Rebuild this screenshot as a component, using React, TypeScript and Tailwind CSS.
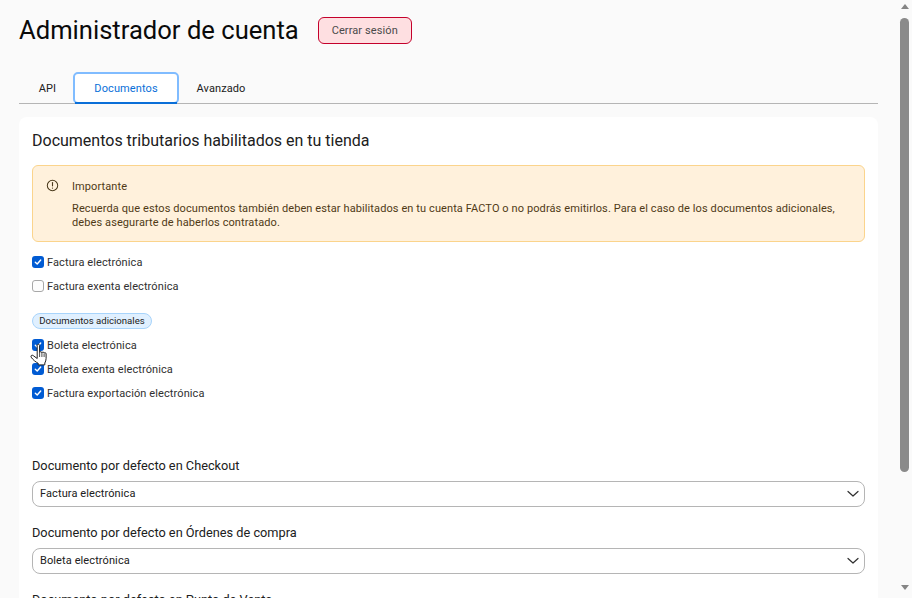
const adicionales = [
  { label: "Boleta electrónica", checked: true },
  { label: "Boleta exenta electrónica", checked: true },
  { label: "Factura exportación electrónica", checked: true },
];

function Checkbox({ label, checked }: { label: string; checked: boolean }) {
  return (
    <label className="flex h-[24px] items-center gap-[3px] text-[11px] tracking-[0.1px] text-[#303030]">
      {checked ? (
        <span className="-mt-[3px] flex h-[12px] w-[12px] items-center justify-center rounded-[3px] bg-[#005bd3]">
          <svg viewBox="0 0 12 12" className="h-[12px] w-[12px]" fill="none">
            <path d="M3.3 6.2 5.2 8l3.5-4" stroke="#fff" strokeWidth="1.4" strokeLinecap="round" strokeLinejoin="round" />
          </svg>
        </span>
      ) : (
        <span className="-mt-[3px] h-[12px] w-[12px] rounded-[3px] border border-[#a8a8a8] bg-[#fdfdfd]" />
      )}
      <span>{label}</span>
    </label>
  );
}

function SelectField({ label, value }: { label: string; value: string }) {
  return (
    <div className="flex flex-col">
      <div className="mb-[6px] text-[12.75px] leading-[18px] text-[#202020]">{label}</div>
      <div className="flex h-[26px] items-center justify-between rounded-[8px] border border-[#b5b5b5] bg-white pl-[7px] pr-[5px] text-[11px] tracking-[0.1px] text-[#202020]">
        <span>{value}</span>
        <svg viewBox="0 0 12 8" className="h-[8px] w-[12px]" fill="none">
          <path d="M1 1.5 6 6l5-4.5" stroke="#303030" strokeWidth="1.2" strokeLinecap="round" strokeLinejoin="round" />
        </svg>
      </div>
    </div>
  );
}

function HandCursor() {
  return (
    <svg viewBox="0 0 18 24" className="absolute left-[-2px] top-[9px] h-[24px] w-[18px]">
      <path
        d="M7.2 2.5c0-1.6 2.4-1.6 2.4 0v7c.4-1.2 2.2-1.1 2.3.3.3-1.1 2.1-1 2.2.4.4-.9 2-.7 2 .7v4.6c0 2-.6 3-1.3 4.5v1.9H8.2v-1.6C5.8 19 3 17 1.2 14.2c-.9-1.5.8-2.7 2-1.6l4 2.9z"
        fill="#fff"
        stroke="#202020"
        strokeWidth="1"
        strokeLinejoin="round"
      />
      <path d="M9.6 9.5v4.5M11.9 10v4M14.1 10.6V14" stroke="#202020" strokeWidth="0.8" fill="none" />
    </svg>
  );
}

export default function App() {
  return (
    <div className="flex h-[598px] w-[912px] overflow-hidden bg-[#fafafa] font-['Roboto',sans-serif]">
      <main className="w-[897px] shrink-0 pl-[19px] pr-[19px]">
        {/* Title */}
        <div className="flex items-center pt-[17px]">
          <h1 className="text-[25.6px] leading-[27px] text-[#0a0a0a]">Administrador de cuenta</h1>
          <button className="ml-[19px] h-[27px] w-[94px] rounded-[6px] border border-[#c4002b] bg-[#fedfe1] pt-[2px] text-[11px] tracking-[0.1px] text-[#4a4a4a]">
            Cerrar sesión
          </button>
        </div>

        {/* Tabs */}
        <div className="mt-[28px] flex h-[32px] items-stretch border-b border-[#b5b5b5] text-[11px] tracking-[0.1px]">
          <div className="flex w-[54px] items-center justify-center pl-[3px] pt-[3px] text-[#202020]">API</div>
          <div className="relative flex h-[32px] w-[106px] items-center justify-center rounded-[5px] border-2 border-[#80bcff] bg-white pt-[2px] text-[#0a6fd8]">
            Documentos
            <span className="absolute bottom-[-2px] left-0 right-0 h-[2px] bg-[#0a6fd8]" />
          </div>
          <div className="flex w-[84px] items-center justify-center pt-[3px] text-[#202020]">Avanzado</div>
        </div>

        {/* Card */}
        <section className="mt-[13px] h-[600px] rounded-[8px] bg-white px-[13px] pt-[14px]">
          <h2 className="text-[16px] leading-[20px] text-[#202020]">Documentos tributarios habilitados en tu tienda</h2>

          <div className="mt-[14px] flex h-[77px] gap-[13px] rounded-[6px] border border-[#fbd48c] bg-[#fff1dc] pl-[13px] pr-[20px] pt-[13px] text-[11px] tracking-[0.1px] text-[#4f3a16]">
            <svg viewBox="0 0 14 14" className="h-[13px] w-[13px] shrink-0" fill="none">
              <circle cx="7" cy="7" r="5.6" stroke="#4a3a1c" strokeWidth="1.1" />
              <path d="M7 3.8v3.6" stroke="#4a3a1c" strokeWidth="1.2" strokeLinecap="round" />
              <circle cx="7" cy="9.8" r="0.7" fill="#4a3a1c" />
            </svg>
            <div>
              <div className="leading-[15px]">Importante</div>
              <p className="mt-[8px] leading-[14px]">
                Recuerda que estos documentos también deben estar habilitados en tu cuenta FACTO o no podrás emitirlos. Para el caso de los documentos adicionales, debes asegurarte de haberlos contratado.
              </p>
            </div>
          </div>

          <div className="mt-[9px] flex flex-col">
            <Checkbox label="Factura electrónica" checked />
            <Checkbox label="Factura exenta electrónica" checked={false} />
          </div>

          <span className="mt-[14px] flex h-[16px] w-[120px] items-center justify-center rounded-full border border-[#a8d4fb] bg-[#e0f0ff] text-[9.6px] text-[#202020]">
            Documentos adicionales
          </span>

          <div className="relative mt-[5px] flex flex-col">
            {adicionales.map((doc) => (
              <Checkbox key={doc.label} label={doc.label} checked={doc.checked} />
            ))}
            <HandCursor />
          </div>

          <div className="mt-[51px] flex flex-col gap-[17px]">
            <SelectField label="Documento por defecto en Checkout" value="Factura electrónica" />
            <SelectField label="Documento por defecto en Órdenes de compra" value="Boleta electrónica" />
            <SelectField label="Documento por defecto en Punto de Venta" value="Boleta electrónica" />
          </div>
        </section>
      </main>

      {/* Scrollbar */}
      <div className="flex w-[15px] shrink-0 flex-col items-center bg-[#fafafa]">
        <div className="mt-[4px] h-0 w-0 border-x-[4px] border-b-[5px] border-x-transparent border-b-[#858585]" />
        <div className="mt-[9px] h-[454px] w-[9px] rounded-full bg-[#8a8a8a]" />
        <div className="mt-[113px] h-0 w-0 border-x-[4px] border-t-[5px] border-x-transparent border-t-[#858585]" />
      </div>
    </div>
  );
}
